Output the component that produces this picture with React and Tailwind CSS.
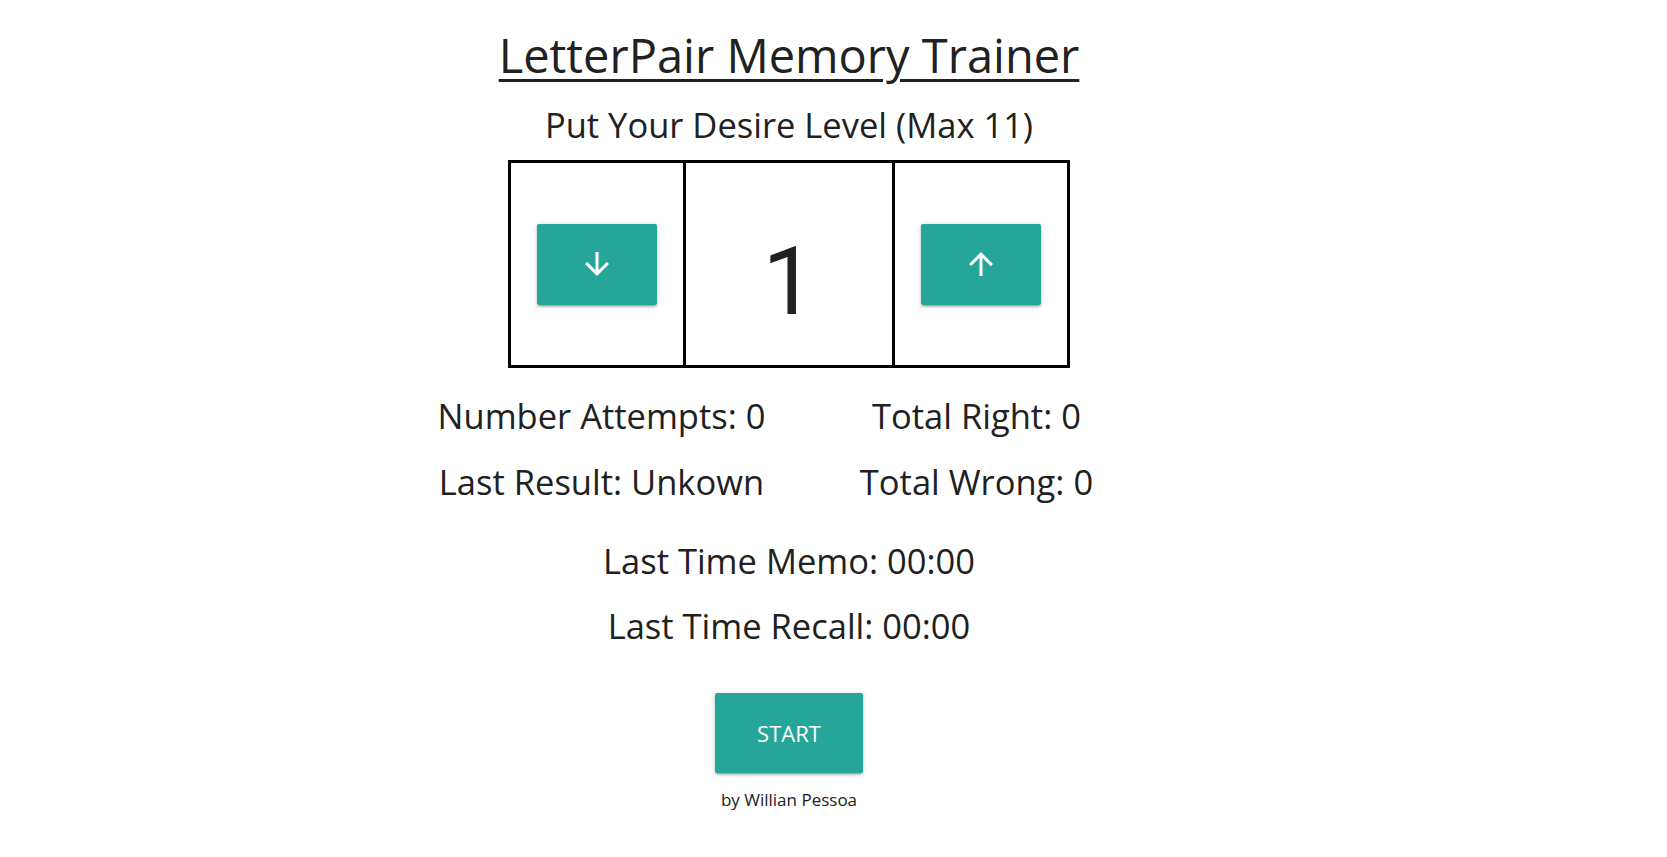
import React, { useState } from 'react';

const teal = 'bg-[#26a69a]';
const raised =
  'shadow-[0_2px_2px_0_rgba(0,0,0,0.14),0_3px_1px_-2px_rgba(0,0,0,0.12),0_1px_5px_0_rgba(0,0,0,0.2)]';

function ArrowDown() {
  return (
    <svg width="36" height="36" viewBox="0 0 24 24" fill="white">
      <path d="M20 12l-1.41-1.41L13 16.17V4h-2v12.17l-5.58-5.59L4 12l8 8 8-8z" />
    </svg>
  );
}

function ArrowUp() {
  return (
    <svg width="36" height="36" viewBox="0 0 24 24" fill="white">
      <path d="M4 12l1.41 1.41L11 7.83V20h2V7.83l5.58 5.59L20 12l-8-8-8 8z" />
    </svg>
  );
}

function App() {
  const [level, setLevel] = useState(1);

  const stats = {
    attempts: 0,
    right: 0,
    wrong: 0,
    lastResult: 'Unkown',
    memo: '00:00',
    recall: '00:00',
  };

  return (
    <div
      className="min-h-screen bg-white text-[#212121] flex flex-col items-center pr-[89px]"
      style={{ fontFamily: '"Open Sans", "Noto Sans", sans-serif' }}
    >
      <h1 className="mt-[27px] text-[47px] leading-[56px] underline underline-offset-[6px] decoration-[3px]">
        LetterPair Memory Trainer
      </h1>
      <h4 className="mt-[22px] text-[34.5px] leading-[40px]">Put Your Desire Level (Max 11)</h4>

      <div className="mt-[15px] grid grid-cols-[175px_209px_172px] h-[208px] border-[3px] border-black divide-x-[3px] divide-black">
        <div className="flex items-center justify-center">
          <button
            onClick={() => setLevel(Math.max(1, level - 1))}
            className={`w-[120px] h-[81px] rounded-[2px] ${teal} ${raised} flex items-center justify-center`}
          >
            <ArrowDown />
          </button>
        </div>
        <div className="flex items-center justify-center">
          <span
            className="mt-[36px] text-[94px] leading-none"
            style={{ fontFamily: 'Roboto, sans-serif' }}
          >
            {level}
          </span>
        </div>
        <div className="flex items-center justify-center">
          <button
            onClick={() => setLevel(Math.min(11, level + 1))}
            className={`w-[120px] h-[81px] rounded-[2px] ${teal} ${raised} flex items-center justify-center`}
          >
            <ArrowUp />
          </button>
        </div>
      </div>

      <div className="mt-[15px] w-[750px] grid grid-cols-2 text-center text-[34.5px] leading-[66px]">
        <div>Number Attempts: {stats.attempts}</div>
        <div>Total Right: {stats.right}</div>
        <div>Last Result: {stats.lastResult}</div>
        <div>Total Wrong: {stats.wrong}</div>
      </div>

      <div className="mt-[13px] text-center text-[34.5px] leading-[65px]">
        <div>Last Time Memo: {stats.memo}</div>
        <div>Last Time Recall: {stats.recall}</div>
      </div>

      <button
        className={`mt-[35px] w-[148px] h-[80px] rounded-[2px] ${teal} ${raised} text-white text-[22px] uppercase`}
      >
        Start
      </button>

      <p className="mt-[15px] text-[17px] leading-[24px]">by Willian Pessoa</p>
    </div>
  );
}

export default App;
